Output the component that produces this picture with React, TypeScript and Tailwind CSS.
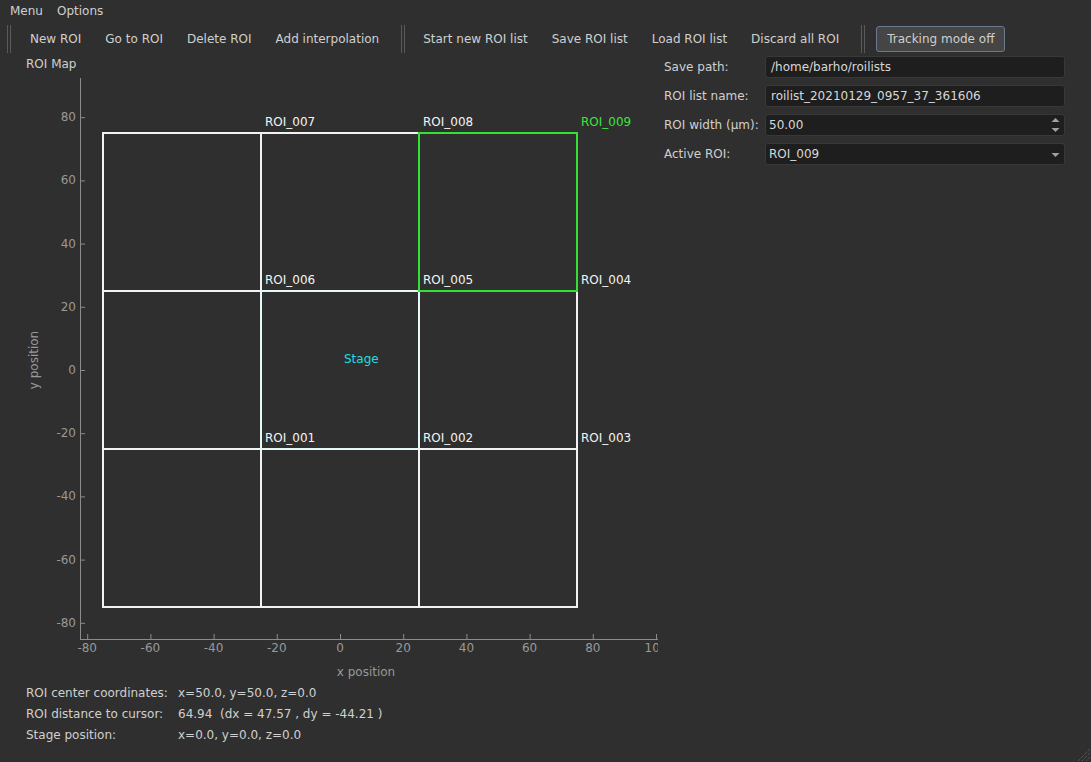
const X = (v: number) => 340 + v * 3.16;
const Y = (v: number) => 370 - v * 3.16;

const ticks = [-80, -60, -40, -20, 0, 20, 40, 60, 80];
const xTicks = [...ticks, 100];

// snake ordered roi grid, center coords
const rois = [
  { name: 'ROI_001', x: -50, y: -50 },
  { name: 'ROI_002', x: 0, y: -50 },
  { name: 'ROI_003', x: 50, y: -50 },
  { name: 'ROI_004', x: 50, y: 0 },
  { name: 'ROI_005', x: 0, y: 0 },
  { name: 'ROI_006', x: -50, y: 0 },
  { name: 'ROI_007', x: -50, y: 50 },
  { name: 'ROI_008', x: 0, y: 50 },
  { name: 'ROI_009', x: 50, y: 50 },
];

const Handle = ({ className = '' }: { className?: string }) => (
  <div className={`h-[28px] w-[4px] border-x border-[#5a5a5a] ${className}`} />
);

const ToolButton = ({ children }: { children: React.ReactNode }) => (
  <div className="px-[12px] whitespace-nowrap">{children}</div>
);

const RoiPlot = () => (
  <svg width={658} height={610} viewBox="0 72 658 610" className="block" fontFamily="'DejaVu Sans', sans-serif" fontSize={12}>
    {/* axes */}
    <line x1={80.5} y1={78} x2={80.5} y2={640} stroke="#8c8c8c" strokeWidth={1} />
    <line x1={80} y1={639.5} x2={658} y2={639.5} stroke="#8c8c8c" strokeWidth={1} />
    {ticks.map((t) => (
      <g key={'y' + t}>
        <line x1={80} y1={Y(t) + 0.5} x2={85} y2={Y(t) + 0.5} stroke="#8c8c8c" />
        <text x={76} y={Y(t)} textAnchor="end" dominantBaseline="central" fill="#999999">
          {t}
        </text>
      </g>
    ))}
    {xTicks.map((t) => (
      <g key={'x' + t}>
        <line x1={X(t) + 0.5} y1={639} x2={X(t) + 0.5} y2={634} stroke="#8c8c8c" />
        <text x={X(t)} y={648} textAnchor="middle" dominantBaseline="central" fill="#999999">
          {t}
        </text>
      </g>
    ))}
    <text x={366} y={672} textAnchor="middle" dominantBaseline="central" fill="#999999">
      x position
    </text>
    <text
      x={34}
      y={360}
      textAnchor="middle"
      dominantBaseline="central"
      fill="#999999"
      transform="rotate(-90 34 360)"
    >
      y position
    </text>

    {/* roi squares */}
    {rois.map((r) => (
      <rect
        key={r.name}
        x={X(r.x - 25)}
        y={Y(r.y + 25)}
        width={158}
        height={158}
        fill="none"
        stroke="#f2f2f2"
        strokeWidth={2}
      />
    ))}
    {/* stage */}
    <rect x={X(-25)} y={Y(25)} width={158} height={158} fill="none" stroke="#e2fbfb" strokeWidth={1.5} />
    <text x={344} y={358.5} dominantBaseline="central" fill="#1fdde6">
      Stage
    </text>
    {/* active */}
    <rect x={X(25)} y={Y(75)} width={158} height={158} fill="none" stroke="#33e033" strokeWidth={2} />

    {rois.map((r) => (
      <text
        key={'l' + r.name}
        x={X(r.x + 25) + 4}
        y={Y(r.y + 25) - 11}
        dominantBaseline="central"
        fill={r.name === 'ROI_009' ? '#3be63b' : '#f4f4f4'}
      >
        {r.name}
      </text>
    ))}
  </svg>
);

const Field = ({ children, pad = 'pl-[4px]' }: { children: React.ReactNode; pad?: string }) => (
  <div className={`relative h-[22px] rounded-[3px] border border-[#383838] bg-[#1e1e1e] flex items-center text-[#d8d8d8] ${pad}`}>
    {children}
  </div>
);

export default function App() {
  return (
    <div className="relative w-[1091px] h-[762px] overflow-hidden bg-[#2f2f2f] text-[12px] text-[#d0d0d0] font-['DejaVu_Sans',sans-serif] flex flex-col">
      {/* menu bar */}
      <div className="h-[21px] flex items-center gap-[14px] pl-[10px]">
        <span>Menu</span>
        <span>Options</span>
      </div>

      {/* toolbar */}
      <div className="h-[34px] flex items-center pt-[2px]">
        <Handle className="ml-[7px] mr-[7px]" />
        <ToolButton>New ROI</ToolButton>
        <ToolButton>Go to ROI</ToolButton>
        <ToolButton>Delete ROI</ToolButton>
        <ToolButton>Add interpolation</ToolButton>
        <Handle className="ml-[10px] mr-[6px]" />
        <ToolButton>Start new ROI list</ToolButton>
        <ToolButton>Save ROI list</ToolButton>
        <ToolButton>Load ROI list</ToolButton>
        <ToolButton>Discard all ROI</ToolButton>
        <Handle className="ml-[10px]" />
        <button className="ml-[11px] h-[26px] px-[10px] rounded-[3px] border border-[#6b7b8f] bg-[#454545] text-[#cfcfcf] whitespace-nowrap">
          Tracking mode off
        </button>
      </div>

      {/* main */}
      <div className="flex flex-1">
        <div className="w-[660px] flex flex-col">
          <div className="pl-[26px] h-[17px] leading-[19px]">ROI Map</div>
          <RoiPlot />
          <div className="pl-[26px] pt-[1px] grid grid-cols-[152px_1fr] leading-[21px]">
            <span>ROI center coordinates:</span>
            <span>x=50.0, y=50.0, z=0.0</span>
            <span>ROI distance to cursor:</span>
            <span className="whitespace-pre">64.94  (dx = 47.57 , dy = -44.21 )</span>
            <span>Stage position:</span>
            <span>x=0.0, y=0.0, z=0.0</span>
          </div>
        </div>

        <div className="pl-[4px] pt-[1px]">
          <div className="grid grid-cols-[101px_300px] gap-y-[7px] items-center">
            <span>Save path:</span>
            <Field pad="pl-[5px]">/home/barho/roilists</Field>
            <span>ROI list name:</span>
            <Field pad="pl-[5px]">roilist_20210129_0957_37_361606</Field>
            <span>ROI width (µm):</span>
            <Field pad="pl-[3px]">
              50.00
              <svg width={9} height={18} className="absolute right-[4px] top-[1px]">
                <path d="M0.5 6 L4.5 2 L8.5 6 Z" fill="#a0a0a0" />
                <path d="M0.5 12 L4.5 16 L8.5 12 Z" fill="#a0a0a0" />
              </svg>
            </Field>
            <span>Active ROI:</span>
            <Field pad="pl-[3px]">
              ROI_009
              <svg width={9} height={6} className="absolute right-[4px] top-[8px]">
                <path d="M0.5 1 L4.5 5 L8.5 1 Z" fill="#a0a0a0" />
              </svg>
            </Field>
          </div>
        </div>
      </div>

      {/* size grip */}
      <svg width={14} height={14} className="absolute right-0 bottom-0">
        <line x1={13} y1={1} x2={1} y2={13} stroke="#6a6a6a" strokeDasharray="1 1" />
        <line x1={13} y1={5} x2={5} y2={13} stroke="#6a6a6a" strokeDasharray="1 1" />
        <line x1={13} y1={9} x2={9} y2={13} stroke="#6a6a6a" strokeDasharray="1 1" />
      </svg>
    </div>
  );
}
